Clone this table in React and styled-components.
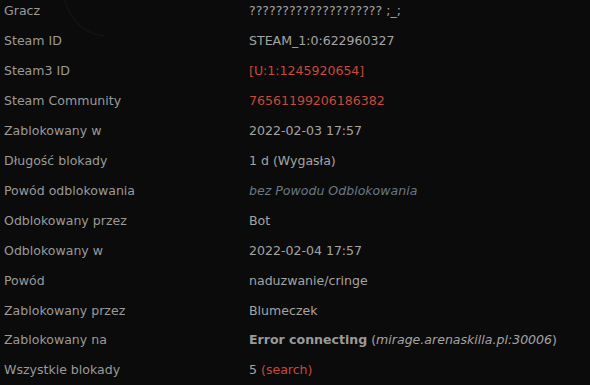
import React from "react";
import styled, { createGlobalStyle } from "styled-components";

const GlobalStyle = createGlobalStyle`
    html, body {
        margin: 0;
        padding: 0;
        background: #0b0b0b;
        overflow: hidden;
    }
`;

const rows = [
    { label: "Gracz", value: "???????????????????? ;_;" },
    { label: "Steam ID", value: "STEAM_1:0:622960327" },
    { label: "Steam3 ID", value: "[U:1:1245920654]", kind: "link" },
    { label: "Steam Community", value: "76561199206186382", kind: "link" },
    { label: "Zablokowany w", value: "2022-02-03 17:57" },
    { label: "Długość blokady", value: "1 d (Wygasła)" },
    { label: "Powód odblokowania", value: "bez Powodu Odblokowania", kind: "muted" },
    { label: "Odblokowany przez", value: "Bot" },
    { label: "Odblokowany w", value: "2022-02-04 17:57" },
    { label: "Powód", value: "naduzwanie/cringe" },
    { label: "Zablokowany przez", value: "Blumeczek" },
    { label: "Zablokowany na", server: true },
    { label: "Wszystkie blokady", total: true },
];

export default function App() {
    return (
        <Page>
            <GlobalStyle />
            <Watermark width="120" height="60" viewBox="0 0 120 60">
                <path d="M64 -2 C70 20 82 33 104 36" fill="none" stroke="#131313" strokeWidth="1.5" />
            </Watermark>
            <Table>
                {rows.map((r, i) => (
                    <Row key={i}>
                        <Label>{r.label}</Label>
                        <Value kind={r.kind}>
                            {r.server ? (
                                <>
                                    <b>Error connecting</b> (<i>mirage.arenaskilla.pl:30006</i>)
                                </>
                            ) : r.total ? (
                                <>
                                    5 <Link>(search)</Link>
                                </>
                            ) : (
                                r.value
                            )}
                        </Value>
                    </Row>
                ))}
            </Table>
        </Page>
    );
}

const Page = styled.div`
    position: relative;
    width: 590px;
    height: 385px;
    overflow: hidden;
    background: #0b0b0b;
    font-family: "DejaVu Sans", Verdana, sans-serif;
    font-size: 12.55px;
`;

const Watermark = styled.svg`
    position: absolute;
    left: 0;
    top: 0;
`;

const Table = styled.div`
    position: relative;
    display: flex;
    flex-direction: column;
    margin-top: -4px;
`;

const Row = styled.div`
    display: grid;
    grid-template-columns: 249px 1fr;
    height: 29.92px;
    align-items: center;
`;

const Label = styled.div`
    padding-left: 4px;
    color: #9a9a9a;
    white-space: nowrap;
`;

const Value = styled.div`
    white-space: nowrap;
    color: ${(p) => (p.kind === "link" ? "#c9483a" : p.kind === "muted" ? "#687886" : "#a4a4a4")};
    font-style: ${(p) => (p.kind === "muted" ? "italic" : "normal")};

    b {
        font-weight: bold;
        color: #9a9a9a;
    }
    i {
        color: #a4a4a4;
    }
`;

const Link = styled.span`
    color: #c9483a;
`;
